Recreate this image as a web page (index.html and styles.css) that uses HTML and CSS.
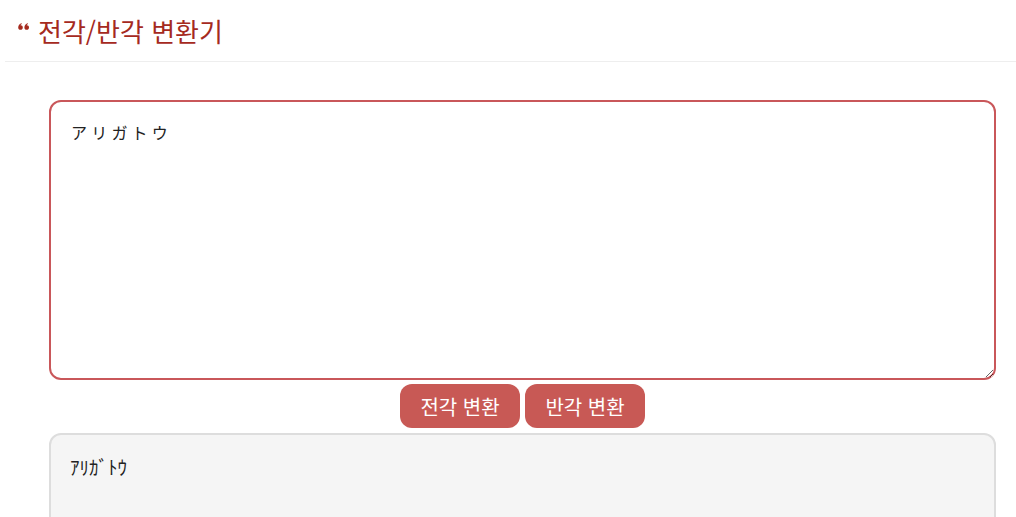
FILE: index.html
```html
<!DOCTYPE html>
<html lang="ko">
<head>
<meta charset="utf-8">
<link rel="stylesheet" href="styles.css">
</head>
<body>
<header class="header">
  <h1 class="title"><svg class="quote" viewBox="0 0 12 8" width="12" height="8" aria-hidden="true"><path d="M2.7 2.2 C3.9 2.2 4.8 3.1 4.8 4.4 C4.8 5.8 3.8 6.8 2.5 6.8 C1.1 6.8 0.2 5.8 0.2 4.4 C0.2 2.4 1.6 0.8 3.6 0.3 L3.9 1.1 C3.1 1.4 2.6 1.8 2.4 2.3 Z M8.9 2.2 C10.1 2.2 11 3.1 11 4.4 C11 5.8 10 6.8 8.7 6.8 C7.3 6.8 6.4 5.8 6.4 4.4 C6.4 2.4 7.8 0.8 9.8 0.3 L10.1 1.1 C9.3 1.4 8.8 1.8 8.6 2.3 Z" fill="#a52a1e"/></svg>전각/반각 변환기</h1>
</header>
<main class="main">
  <textarea class="input">アリガトウ</textarea>
  <div class="actions">
    <button class="btn">전각 변환</button>
    <button class="btn">반각 변환</button>
  </div>
  <div class="output">ｱﾘｶﾞﾄｳ</div>
</main>
</body>
</html>
```
FILE: styles.css
```css
html, body { margin: 0; padding: 0; background: #fff; }
body { font-family: "Noto Sans CJK KR", "Noto Sans", sans-serif; overflow: hidden; }
.header {
  margin-left: 5px;
  height: 61px;
  border-bottom: 1px solid #eeeeee;
  display: flex;
  align-items: center;
}
.title {
  margin: 0 0 0 13px;
  font-weight: normal;
  font-size: 26px;
  color: #a52a1e;
  display: flex;
  align-items: center;
  gap: 8px;
  line-height: 1;
}
.quote { position: relative; top: -4px; flex: none; }
.main {
  padding: 38px 20px 0 49px;
  display: flex;
  flex-direction: column;
  align-items: stretch;
}
.input {
  box-sizing: border-box;
  height: 280px;
  border: 2px solid #c9575a;
  border-radius: 12px;
  padding: 18px 20px;
  font-family: "Noto Sans CJK JP", sans-serif;
  font-size: 16px;
  letter-spacing: 4.2px;
  color: #222;
  outline: none;
  resize: vertical;
  margin: 0;
  display: block;
}
.actions {
  display: flex;
  justify-content: center;
  gap: 5px;
  margin-top: 4px;
}
.btn {
  width: 120px;
  height: 44px;
  border: none;
  border-radius: 12px;
  background: #c85955;
  color: #fff;
  font-family: "Noto Sans CJK KR", sans-serif;
  font-size: 20px;
  padding: 0;
}
.output {
  margin-top: 5px;
  box-sizing: border-box;
  height: 200px;
  border: 2px solid #dddddd;
  border-radius: 12px;
  background: #f5f5f5;
  padding: 18px 19px;
  font-family: "Noto Sans CJK JP", sans-serif;
  font-size: 19px;
  color: #222;
}
```
